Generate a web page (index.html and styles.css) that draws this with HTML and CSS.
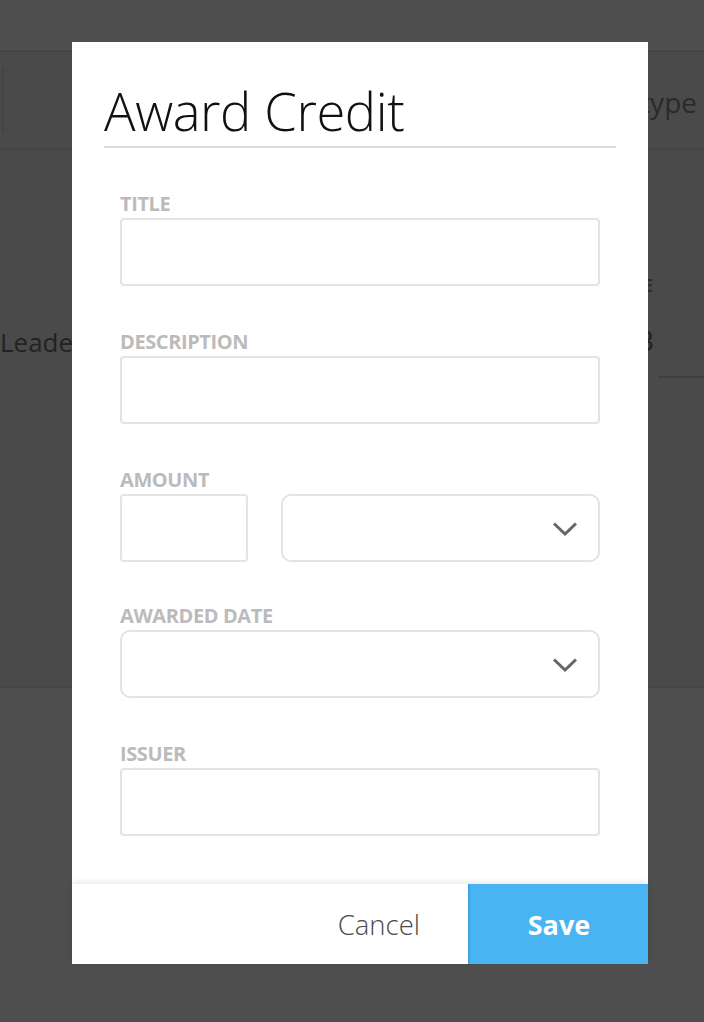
FILE: index.html
```html
<!DOCTYPE html>
<html lang="en">
<head>
<meta charset="utf-8">
<title>Award Credit</title>
<link rel="stylesheet" href="styles.css">
</head>
<body>
<div class="page">
  <div class="page-top"></div>
  <div class="page-toolbar">
    <div class="tool-sep"></div>
    <div class="tool-text">type</div>
  </div>
  <div class="page-content">
    <div class="row">
      <div class="cell-left">Leade</div>
      <div class="cell-gap"></div>
      <div class="cell-right">
        <div class="cell-label">E</div>
        <div class="cell-value">3</div>
      </div>
      <div class="cell-edge"></div>
    </div>
  </div>
  <div class="page-bottom"></div>
</div>

<div class="modal">
  <h1 class="modal-title">Award Credit</h1>
  <form class="modal-form">
    <div class="field">
      <label class="field-label">TITLE</label>
      <div class="input"></div>
    </div>
    <div class="field">
      <label class="field-label">DESCRIPTION</label>
      <div class="input"></div>
    </div>
    <div class="field field-tight">
      <label class="field-label">AMOUNT</label>
      <div class="field-row">
        <div class="input input-small"></div>
        <div class="select select-grow">
          <svg class="chev" width="26" height="16" viewBox="0 0 26 16"><path d="M2 2.5 L13 13 L24 2.5" fill="none" stroke="#666" stroke-width="3"/></svg>
        </div>
      </div>
    </div>
    <div class="field">
      <label class="field-label">AWARDED DATE</label>
      <div class="select">
        <svg class="chev" width="26" height="16" viewBox="0 0 26 16"><path d="M2 2.5 L13 13 L24 2.5" fill="none" stroke="#666" stroke-width="3"/></svg>
      </div>
    </div>
    <div class="field">
      <label class="field-label">ISSUER</label>
      <div class="input"></div>
    </div>
  </form>
  <div class="modal-footer">
    <div class="btn-cancel">Cancel</div>
    <div class="btn-save">Save</div>
  </div>
</div>
</body>
</html>
```

FILE: styles.css
```css
html, body {
  margin: 0;
  padding: 0;
}
body {
  width: 704px;
  height: 1022px;
  overflow: hidden;
  background: #4e4e4e;
  font-family: "Open Sans", "Liberation Sans", sans-serif;
}
.page {
  display: flex;
  flex-direction: column;
  height: 1022px;
}
.page-top {
  height: 50px;
  background: #4e4e4e;
}
.page-toolbar {
  height: 96px;
  background: #4a4a4a;
  border-top: 2px solid #454545;
  border-bottom: 2px solid #464646;
  display: flex;
  align-items: center;
  justify-content: space-between;
  padding-right: 7px;
}
.tool-sep {
  width: 2px;
  height: 64px;
  margin-left: 2px;
  background: #444;
}
.tool-text {
  font-size: 28px;
  font-weight: 400;
  color: #2a2a2a;
  margin-top: 4px;
}
.page-content {
  height: 536px;
  background: #4a4a4a;
  border-bottom: 2px solid #464646;
  box-shadow: 0 2px 3px rgba(0,0,0,0.12);
}
.row {
  display: flex;
  margin-top: 120px;
}
.cell-left {
  font-size: 26px;
  color: #222;
  padding-top: 54px;
  width: 72px;
  white-space: nowrap;
}
.cell-gap {
  width: 566px;
}
.cell-right {
  width: 15px;
  text-align: right;
  padding-top: 4px;
}
.cell-label {
  font-size: 17px;
  font-weight: 700;
  color: #2e2e2e;
}
.cell-value {
  font-size: 28px;
  color: #222;
  margin-top: 24px;
  height: 46px;
}
.cell-edge {
  flex: 1;
  margin-left: 5px;
  border-bottom: 2px solid #404040;
  height: 106px;
}
.page-bottom {
  flex: 1;
  background: #4e4e4e;
}

.modal {
  position: fixed;
  top: 42px;
  left: 72px;
  width: 576px;
  height: 922px;
  background: #fff;
  display: flex;
  flex-direction: column;
}
.modal-title {
  margin: 0 32px;
  padding: 37px 0 3px;
  font-size: 52.5px;
  line-height: 64px;
  font-weight: 300;
  color: #111;
  border-bottom: 2px solid #dedede;
  letter-spacing: -0.4px;
}
.modal-form {
  flex: 1;
  margin: 0;
  padding: 46px 48px 0 48px;
  display: flex;
  flex-direction: column;
  gap: 46px;
}
.field {
  display: flex;
  flex-direction: column;
  gap: 4px;
}
.field-tight {
  margin-bottom: -2px;
}
.field-label {
  font-size: 20px;
  line-height: 20px;
  font-weight: 700;
  color: #bbbbbb;
  letter-spacing: -0.4px;
}
.input, .select {
  box-sizing: border-box;
  height: 68px;
  border: 2px solid #e4e4e4;
  border-radius: 4px;
}
.field-row {
  display: flex;
  gap: 33px;
}
.input-small {
  width: 128px;
}
.select {
  border-radius: 10px;
  display: flex;
  align-items: center;
  justify-content: flex-end;
  padding-right: 20px;
}
.select-grow {
  flex: 1;
}
.chev {
  display: block;
  margin-top: 2px;
}
.modal-footer {
  height: 80px;
  display: flex;
  box-shadow: 0 -2px 6px rgba(0,0,0,0.09);
  position: relative;
}
.btn-cancel {
  flex: 1;
  display: flex;
  align-items: center;
  justify-content: flex-end;
  padding-right: 48px;
  font-size: 27.5px;
  font-weight: 300;
  color: #4a4a4a;
  background: #fff;
}
.btn-save {
  width: 178px;
  border-left: 2px solid #3ea6e2;
  background: #48b4f2;
  color: #fff;
  font-size: 27px;
  font-weight: 700;
  display: flex;
  align-items: center;
  justify-content: center;
}
```
